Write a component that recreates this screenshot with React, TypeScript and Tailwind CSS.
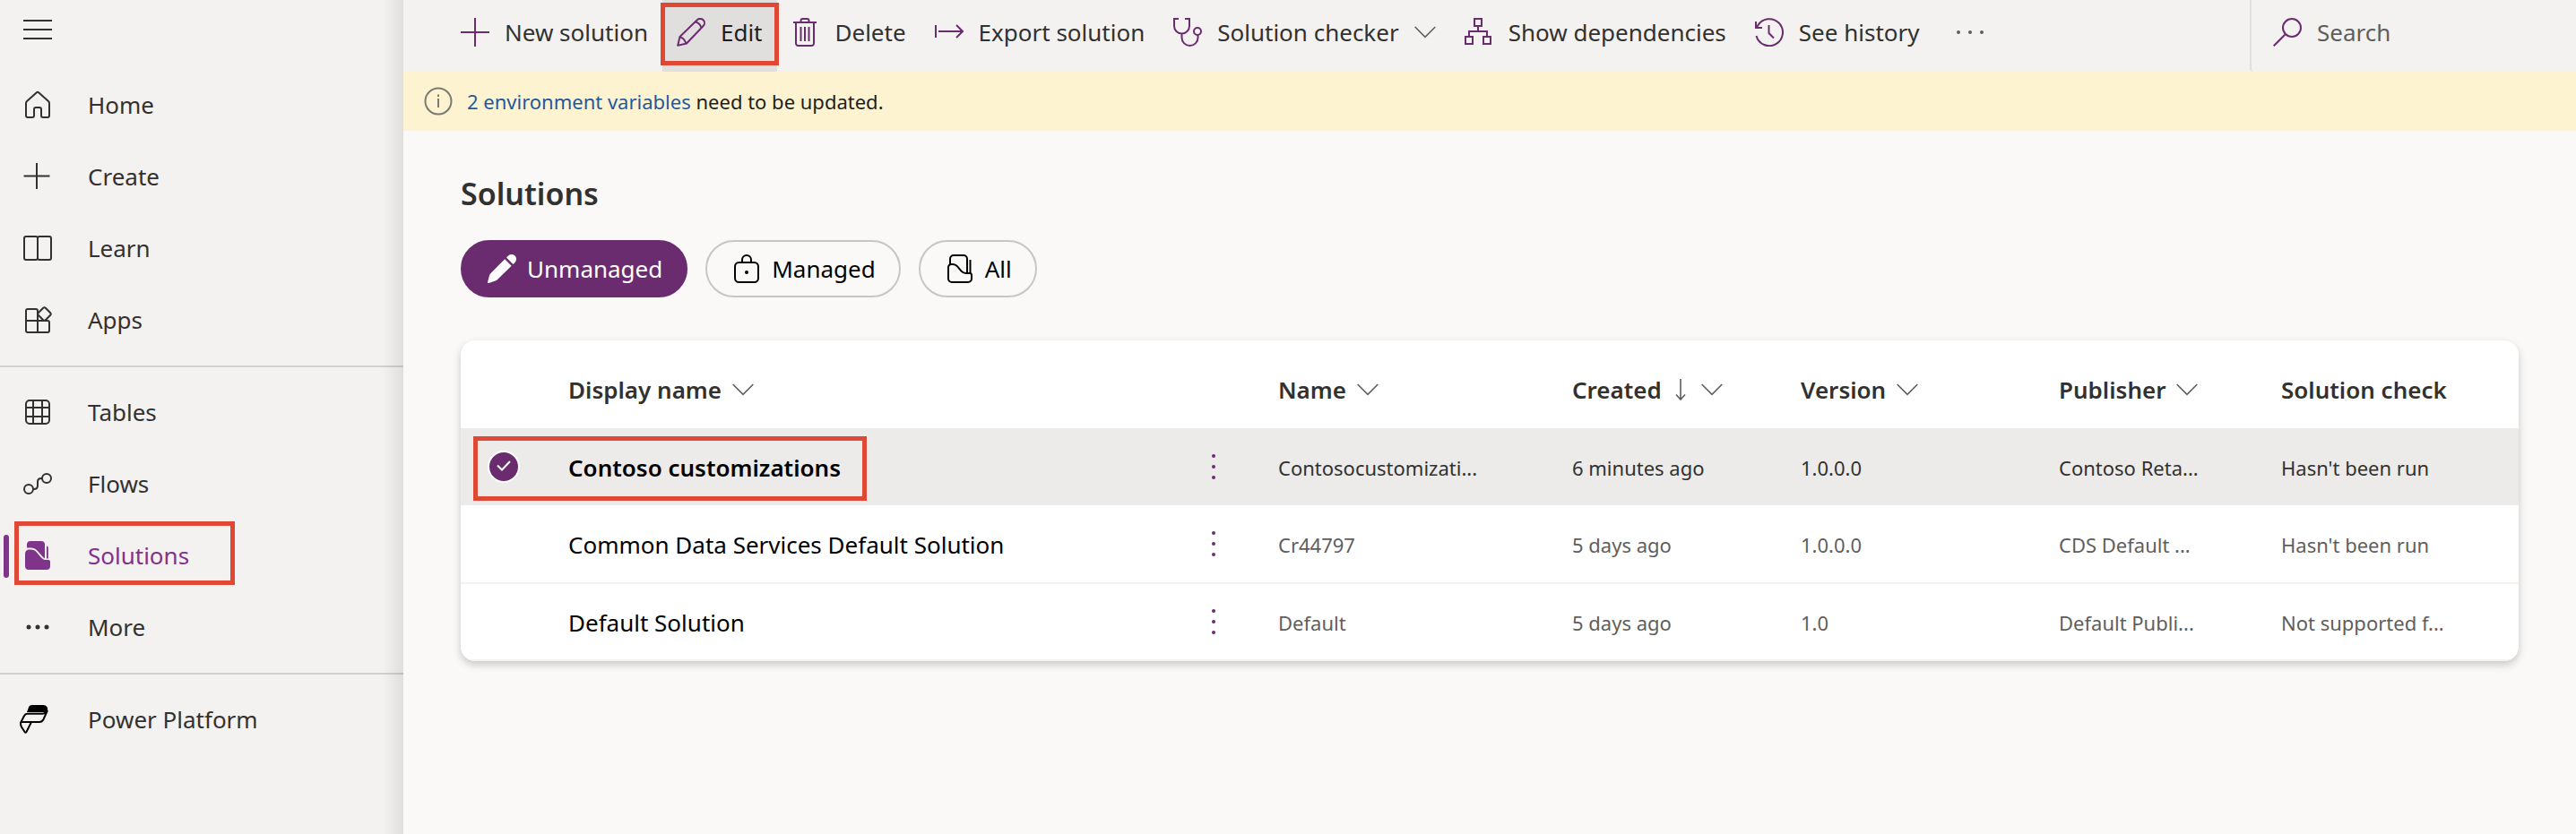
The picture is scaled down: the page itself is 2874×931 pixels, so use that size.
import React from "react";

type IconProps = { className?: string };

function Svg({ className = "", children }: { className?: string; children: React.ReactNode }) {
  return (
    <svg
      viewBox="0 0 32 32"
      className={`size-8 shrink-0 ${className}`}
      fill="none"
      stroke="currentColor"
      strokeWidth="2"
      aria-hidden="true"
    >
      {children}
    </svg>
  );
}

const HomeIcon = () => (
  <Svg>
    <path d="M3 14.2a3 3 0 0 1 1-2.2L14.6 2.5a2 2 0 0 1 2.8 0L28 12a3 3 0 0 1 1 2.2V28a2 2 0 0 1-2 2h-5a2 2 0 0 1-2-2v-7a2 2 0 0 0-2-2h-4a2 2 0 0 0-2 2v7a2 2 0 0 1-2 2H5a2 2 0 0 1-2-2z" />
  </Svg>
);
const CreateIcon = () => (
  <Svg>
    <path d="M15 1v29M.5 15.5h29" />
  </Svg>
);
const LearnIcon = () => (
  <Svg>
    <path d="M3 3h11a2 2 0 0 1 2 2v22a2 2 0 0 1-2 2H3a2 2 0 0 1-2-2V5a2 2 0 0 1 2-2zM18 3h11a2 2 0 0 1 2 2v22a2 2 0 0 1-2 2H18a2 2 0 0 1-2-2V5a2 2 0 0 1 2-2z" />
  </Svg>
);
const AppsIcon = () => (
  <Svg>
    <path d="M16 16V6a2 2 0 0 0-2-2H5a2 2 0 0 0-2 2v22a2 2 0 0 0 2 2h22a2 2 0 0 0 2-2V19a2 2 0 0 0-2-2H3M16 16v14" />
    <path d="M22.2 2.8a1.8 1.8 0 0 1 2.6 0l5.4 5.4a1.8 1.8 0 0 1 0 2.6l-5.4 5.4a1.8 1.8 0 0 1-2.6 0l-5.4-5.4a1.8 1.8 0 0 1 0-2.6z" />
  </Svg>
);
const TablesIcon = () => (
  <Svg>
    <rect x="3" y="3" width="26" height="26" rx="4" />
    <path d="M11 3v26M21 3v26M3 11h26M3 21h26" />
  </Svg>
);
const FlowsIcon = () => (
  <Svg>
    <circle cx="6" cy="22" r="5" />
    <circle cx="26" cy="10" r="5" />
    <path d="M11 22h1c2.500 0 4-1.500 4-4v-4c0-2.500 1.500-4 4-4h1" />
  </Svg>
);
const SolutionsFilledIcon = () => (
  <Svg className="text-[#80338a]">
    <g fill="currentColor" stroke="none">
      <path d="M4 7.500V4a4 4 0 0 1 4-4h12a4 4 0 0 1 4 4v15.200c-1-.4-1.800-1-2.600-1.900l-5.200-6C13.500 8.300 11 7.500 8.500 7.500z" />
      <path d="M2 14a4.500 4.500 0 0 1 4.500-4.500h2c2.600 0 4.500.8 6.300 2.900l5.200 6c1.500 1.700 3.300 2.600 5.500 2.600h2.500a2 2 0 0 1 2 2v5a4 4 0 0 1-4 4H6a4 4 0 0 1-4-4z" />
      <path d="M26 5.500c.8 0 1.800.8 1.800 2v12h-1.800z" />
    </g>
  </Svg>
);
const SolutionsIcon = () => (
  <Svg>
    <path d="M5 11V5a4 4 0 0 1 4-4h11a4 4 0 0 1 4 4v15.500M3 14.500A3.500 3.500 0 0 1 6.500 11h1.700c2 0 3.400.7 4.700 2.200l4.600 5.400c1.400 1.600 2.800 2.400 5 2.400h4a2 2 0 0 1 2.500 2v4a4 4 0 0 1-4 4H7a4 4 0 0 1-4-4z" />
    <path d="M27.500 6v15" />
  </Svg>
);
const MoreIcon = ({ className }: IconProps) => (
  <Svg className={className}>
    <g fill="currentColor" stroke="none">
      <circle cx="6" cy="16" r="2.500" />
      <circle cx="16" cy="16" r="2.500" />
      <circle cx="26" cy="16" r="2.500" />
    </g>
  </Svg>
);
const OverflowIcon = () => (
  <Svg className="text-[#605e5c]">
    <g fill="currentColor" stroke="none">
      <circle cx="3" cy="16" r="2" />
      <circle cx="16" cy="16" r="2" />
      <circle cx="29" cy="16" r="2" />
    </g>
  </Svg>
);
const PowerPlatformIcon = () => (
  <Svg className="-ml-1 mr-1 text-black">
    <path d="M8 8l2-5.500C10.600 1 11.700 0 13.500 0H26c4 0 6 3.200 5 6.500-.4 1.300-1.200 2.500-2 3.500 0-1.600-1-2-2.500-2z" fill="currentColor" stroke="none" />
    <path d="M31 6l-4.500 10c-1 2-2.300 3-4.500 3H1.500L5 12c.8-1.700 1.800-2.300 3.500-2.300h17c2 0 3-.7 4-2.200M1.500 19C.6 21 1 22.500 2 24.500L5.500 30c.6 1 1.400 1 2 0L13 19" />
  </Svg>
);

const PlusIcon = () => (
  <Svg>
    <path d="M16 0v32M0 16h32" />
  </Svg>
);
const EditIcon = () => (
  <Svg>
    <path d="M1.200 30.800l2.300-9.800L22.800 2.300a4.700 4.700 0 0 1 6.800 6.700L11 28.500zM3.500 21.500q5 1 7 7M21 4.500q5 1 6.500 7" strokeLinejoin="round" />
  </Svg>
);
const DeleteIcon = () => (
  <Svg>
    <path d="M2 5h26M10.500 5V3a2 2 0 0 1 2-2h5a2 2 0 0 1 2 2v2M5 5v23.500A2.500 2.500 0 0 0 7.500 31h15a2.500 2.500 0 0 0 2.500-2.500V5M10.500 10v16M15 10v16M19.500 10v16" />
  </Svg>
);
const ExportIcon = () => (
  <Svg>
    <path d="M1 8v14M4 15h27M24 8l7 7-7 7" />
  </Svg>
);
const CheckerIcon = () => (
  <Svg>
    <path d="M6 1H1v8a8.500 8.500 0 0 0 17 0V1h-5M9.500 17.500V22a9 9 0 0 0 18 0v-3" />
    <circle cx="27" cy="15" r="4" />
  </Svg>
);
const DependenciesIcon = () => (
  <Svg>
    <path d="M11 1h8v8h-8zM1 21h8v8H1zM21 21h8v8h-8zM15 9v6M5 21v-6h20v6" />
  </Svg>
);
const HistoryIcon = () => (
  <Svg>
    <path d="M1.500 20A15 15 0 1 0 3 8.700L1 11M1 4v7h7M15.500 8v9l5.500 5.500" />
  </Svg>
);
const SearchIcon = () => (
  <Svg className="text-[#6b2c6f]">
    <circle cx="21" cy="11" r="10" />
    <path d="M14 18L.7 31.300" />
  </Svg>
);
const InfoIcon = () => (
  <Svg className="text-[#7a7974]">
    <circle cx="16" cy="16" r="14.500" />
    <path d="M16 13v10M16 8.500v2.500" />
  </Svg>
);
const PencilFilledIcon = () => (
  <Svg>
    <g fill="currentColor" stroke="none">
      <path d="M19.200 5.300l7.500 7.500L10.500 28.400c-.5.500-1.100.8-1.800 1L1.300 31.900a1 1 0 0 1-1.200-1.200l2-7.400c.2-.7.6-1.300 1-1.800z" />
      <path d="M21 3.500l2-2a5.200 5.200 0 0 1 7.500 7.500l-2 2z" />
    </g>
  </Svg>
);
const LockIcon = () => (
  <Svg>
    <rect x="3" y="9" width="26" height="22" rx="4.500" />
    <path d="M11 9V6a5 5 0 0 1 10 0v3" />
    <circle cx="16" cy="20" r="2" fill="currentColor" stroke="none" />
  </Svg>
);
const Chevron = () => (
  <svg viewBox="0 0 24 24" className="size-6 shrink-0 text-[#605e5c]" fill="none" stroke="currentColor" strokeWidth="1.600" aria-hidden="true">
    <path d="M.7 6L12 17.300 23.300 6" />
  </svg>
);
const SortArrow = () => (
  <svg viewBox="0 0 20 24" className="h-6 w-5 shrink-0 text-[#605e5c]" fill="none" stroke="currentColor" strokeWidth="1.600" aria-hidden="true">
    <path d="M9 0v23M4 17.500l5 5.500 5-5.500" />
  </svg>
);

function Highlight({ className }: { className: string }) {
  return <span className={`pointer-events-none absolute border-[5px] border-[#e04836] ${className}`} />;
}

type NavEntry = { label: string; icon: React.ReactNode; active?: boolean };

const navGroups: NavEntry[][] = [
  [
    { label: "Home", icon: <HomeIcon /> },
    { label: "Create", icon: <CreateIcon /> },
    { label: "Learn", icon: <LearnIcon /> },
    { label: "Apps", icon: <AppsIcon /> },
  ],
  [
    { label: "Tables", icon: <TablesIcon /> },
    { label: "Flows", icon: <FlowsIcon /> },
    { label: "Solutions", icon: <SolutionsFilledIcon />, active: true },
    { label: "More", icon: <MoreIcon /> },
  ],
  [{ label: "Power Platform", icon: <PowerPlatformIcon /> }],
];

function Sidebar() {
  return (
    <aside className="relative w-[450px] shrink-0 bg-[#f3f2f1]">
      <div className="flex h-[77px] items-start pt-[17px] pl-[26px]">
        <button type="button" aria-label="Collapse navigation">
          <Svg>
            <path d="M0 6h32M0 16h32M0 26h32" />
          </Svg>
        </button>
      </div>
      <nav className="divide-y-2 divide-[#d2d0ce] text-[26px] leading-9">
        {navGroups.map((group, i) => (
          <ul key={i} className="pt-2.5 pb-[11px] first:pt-0">
            {group.map((item) => (
              <li key={item.label} className="relative">
                <a
                  href="#"
                  className={
                    item.active
                      ? "flex h-20 items-center gap-10 pl-[26px] text-[#80338a]"
                      : "flex h-20 items-center gap-10 pl-[26px]"
                  }
                >
                  {item.icon}
                  {item.label}
                </a>
                {item.active && (
                  <>
                    <span className="absolute top-[17px] left-1 h-12 w-1.5 rounded-full bg-[#80338a]" />
                    <Highlight className="top-0.5 left-4 h-[71px] w-[246px]" />
                  </>
                )}
              </li>
            ))}
          </ul>
        ))}
      </nav>
      <div className="pointer-events-none absolute inset-y-0 right-0 w-6 bg-linear-to-r from-transparent to-black/8" />
    </aside>
  );
}

const commands = [
  { label: "New solution", icon: <PlusIcon /> },
  { label: "Edit", icon: <EditIcon />, active: true },
  { label: "Delete", icon: <DeleteIcon /> },
  { label: "Export solution", icon: <ExportIcon /> },
  { label: "Solution checker", icon: <CheckerIcon />, menu: true },
  { label: "Show dependencies", icon: <DependenciesIcon /> },
  { label: "See history", icon: <HistoryIcon /> },
];

function CommandBar() {
  return (
    <div className="flex h-20 bg-[#f3f2f1] pl-12 text-[26px] leading-9">
      {commands.map((c) => (
        <button
          key={c.label}
          type="button"
          className={
            c.active
              ? "relative flex items-center gap-[17px] bg-[#e1dfdd] px-4 pb-2 text-[#201f1e]"
              : "relative flex items-center gap-[17px] px-4 pb-2"
          }
        >
          <span className="text-[#6b2c6f]">{c.icon}</span>
          <span className="whitespace-nowrap">{c.label}</span>
          {c.menu && <Chevron />}
          {c.active && <Highlight className="-inset-x-0.5 top-[3px] h-[70px]" />}
        </button>
      ))}
      <button type="button" aria-label="More commands" className="px-6 pb-2">
        <OverflowIcon />
      </button>
      <label className="ml-auto flex w-[364px] items-center gap-[17px] rounded-bl border-l-2 border-[#e1dfdd] pb-2 pl-6">
        <SearchIcon />
        <input
          type="search"
          aria-label="Search"
          placeholder="Search"
          className="w-full min-w-0 bg-transparent outline-none placeholder:text-[#605e5c]"
        />
      </label>
    </div>
  );
}

const filters = [
  { label: "Unmanaged", icon: <PencilFilledIcon />, active: true },
  { label: "Managed", icon: <LockIcon /> },
  { label: "All", icon: <SolutionsIcon /> },
];

const columns = [
  { label: "Name", menu: true },
  { label: "Created", menu: true, sorted: true },
  { label: "Version", menu: true },
  { label: "Publisher", menu: true },
  { label: "Solution check" },
];

const rows = [
  {
    title: "Contoso customizations",
    selected: true,
    cells: ["Contosocustomizati...", "6 minutes ago", "1.0.0.0", "Contoso Reta...", "Hasn't been run"],
  },
  {
    title: "Common Data Services Default Solution",
    cells: ["Cr44797", "5 days ago", "1.0.0.0", "CDS Default ...", "Hasn't been run"],
  },
  {
    title: "Default Solution",
    cells: ["Default", "5 days ago", "1.0", "Default Publi...", "Not supported f..."],
  },
];

function SolutionsTable() {
  return (
    <div className="mt-12 overflow-hidden rounded-2xl bg-white shadow-[0_4px_10px_rgba(0,0,0,0.2)]">
      <table className="w-full table-fixed text-left whitespace-nowrap">
        <colgroup>
          <col className="w-[120px]" />
          <col />
          <col className="w-[104px]" />
          <col className="w-[328px]" />
          <col className="w-[255px]" />
          <col className="w-[288px]" />
          <col className="w-[248px]" />
          <col className="w-[265px]" />
        </colgroup>
        <thead>
          <tr className="h-[98px] text-[26px] leading-9">
            <td />
            <th className="pt-3 font-semibold">
              <span className="flex items-center gap-3">
                Display name <Chevron />
              </span>
            </th>
            <td />
            {columns.map((c) => (
              <th key={c.label} className="pt-3 font-semibold">
                <span className="flex items-center gap-3">
                  {c.label}
                  {c.sorted && <SortArrow />}
                  {c.menu && <Chevron />}
                </span>
              </th>
            ))}
          </tr>
        </thead>
        <tbody>
          {rows.map((r) => (
            <tr
              key={r.title}
              className={
                r.selected
                  ? "h-[86px] bg-[#ecebe9] text-[#323130]"
                  : "h-[87px] border-b-2 border-[#f3f2f1] text-[#605e5c] last:h-[86px]"
              }
            >
              <td className="relative">
                <input
                  type="checkbox"
                  aria-label={`Select ${r.title}`}
                  defaultChecked={r.selected}
                  className={
                    r.selected
                      ? "ml-[30px] block size-9 appearance-none rounded-full border-2 border-white bg-[#6b2c6f]"
                      : "ml-[30px] block size-9 appearance-none rounded-full"
                  }
                />
                {r.selected && (
                  <>
                    <svg
                      viewBox="0 0 16 12"
                      className="pointer-events-none absolute top-9 left-10 h-3 w-4 text-white"
                      fill="none"
                      stroke="currentColor"
                      strokeWidth="2"
                      aria-hidden="true"
                    >
                      <path d="M1 5.500l5 5L15 1" />
                    </svg>
                    <Highlight className="top-[9px] left-3.5 h-[72px] w-[439px]" />
                  </>
                )}
              </td>
              <td
                className={
                  r.selected
                    ? "pt-0.5 text-[26px] font-semibold text-black"
                    : "pt-0.5 text-[26px] text-black"
                }
              >
                {r.title}
              </td>
              <td>
                <button type="button" aria-label="Commands" className="ml-4 block text-[#6b2c6f]">
                  <Svg>
                    <g fill="currentColor" stroke="none">
                      <circle cx="16" cy="4" r="2" />
                      <circle cx="16" cy="16" r="2" />
                      <circle cx="16" cy="28" r="2" />
                    </g>
                  </Svg>
                </button>
              </td>
              {r.cells.map((cell, i) => (
                <td key={i} className="pt-0.5 text-[22px]">
                  {cell}
                </td>
              ))}
            </tr>
          ))}
        </tbody>
      </table>
    </div>
  );
}

export default function App() {
  return (
    <div className="flex min-h-screen bg-[#faf9f8] font-['Noto_Sans','Open_Sans',sans-serif] text-[#323130]">
      <Sidebar />
      <div className="min-w-0 flex-1">
        <CommandBar />
        <div className="flex h-[66px] items-center gap-4 bg-[#fdf3d1] pl-[23px] text-[22px] text-[#201f1e]">
          <InfoIcon />
          <p>
            <a href="#" className="text-[#1f5a9e]">
              2 environment variables
            </a>{" "}
            need to be updated.
          </p>
        </div>
        <main className="px-16 pt-[46px]">
          <h1 className="text-[34px] leading-12 font-semibold">Solutions</h1>
          <div className="mt-7 flex gap-5 text-[26px] leading-9">
            {filters.map((f) => (
              <button
                key={f.label}
                type="button"
                className={
                  f.active
                    ? "flex h-16 items-center gap-3 rounded-full border-2 border-[#6b2c6f] bg-[#6b2c6f] pr-[26px] pl-7 text-white"
                    : "flex h-16 items-center gap-3 rounded-full border-2 border-[#c8c6c4] pr-[26px] pl-7 text-black"
                }
              >
                {f.icon}
                {f.label}
              </button>
            ))}
          </div>
          <SolutionsTable />
        </main>
      </div>
    </div>
  );
}
